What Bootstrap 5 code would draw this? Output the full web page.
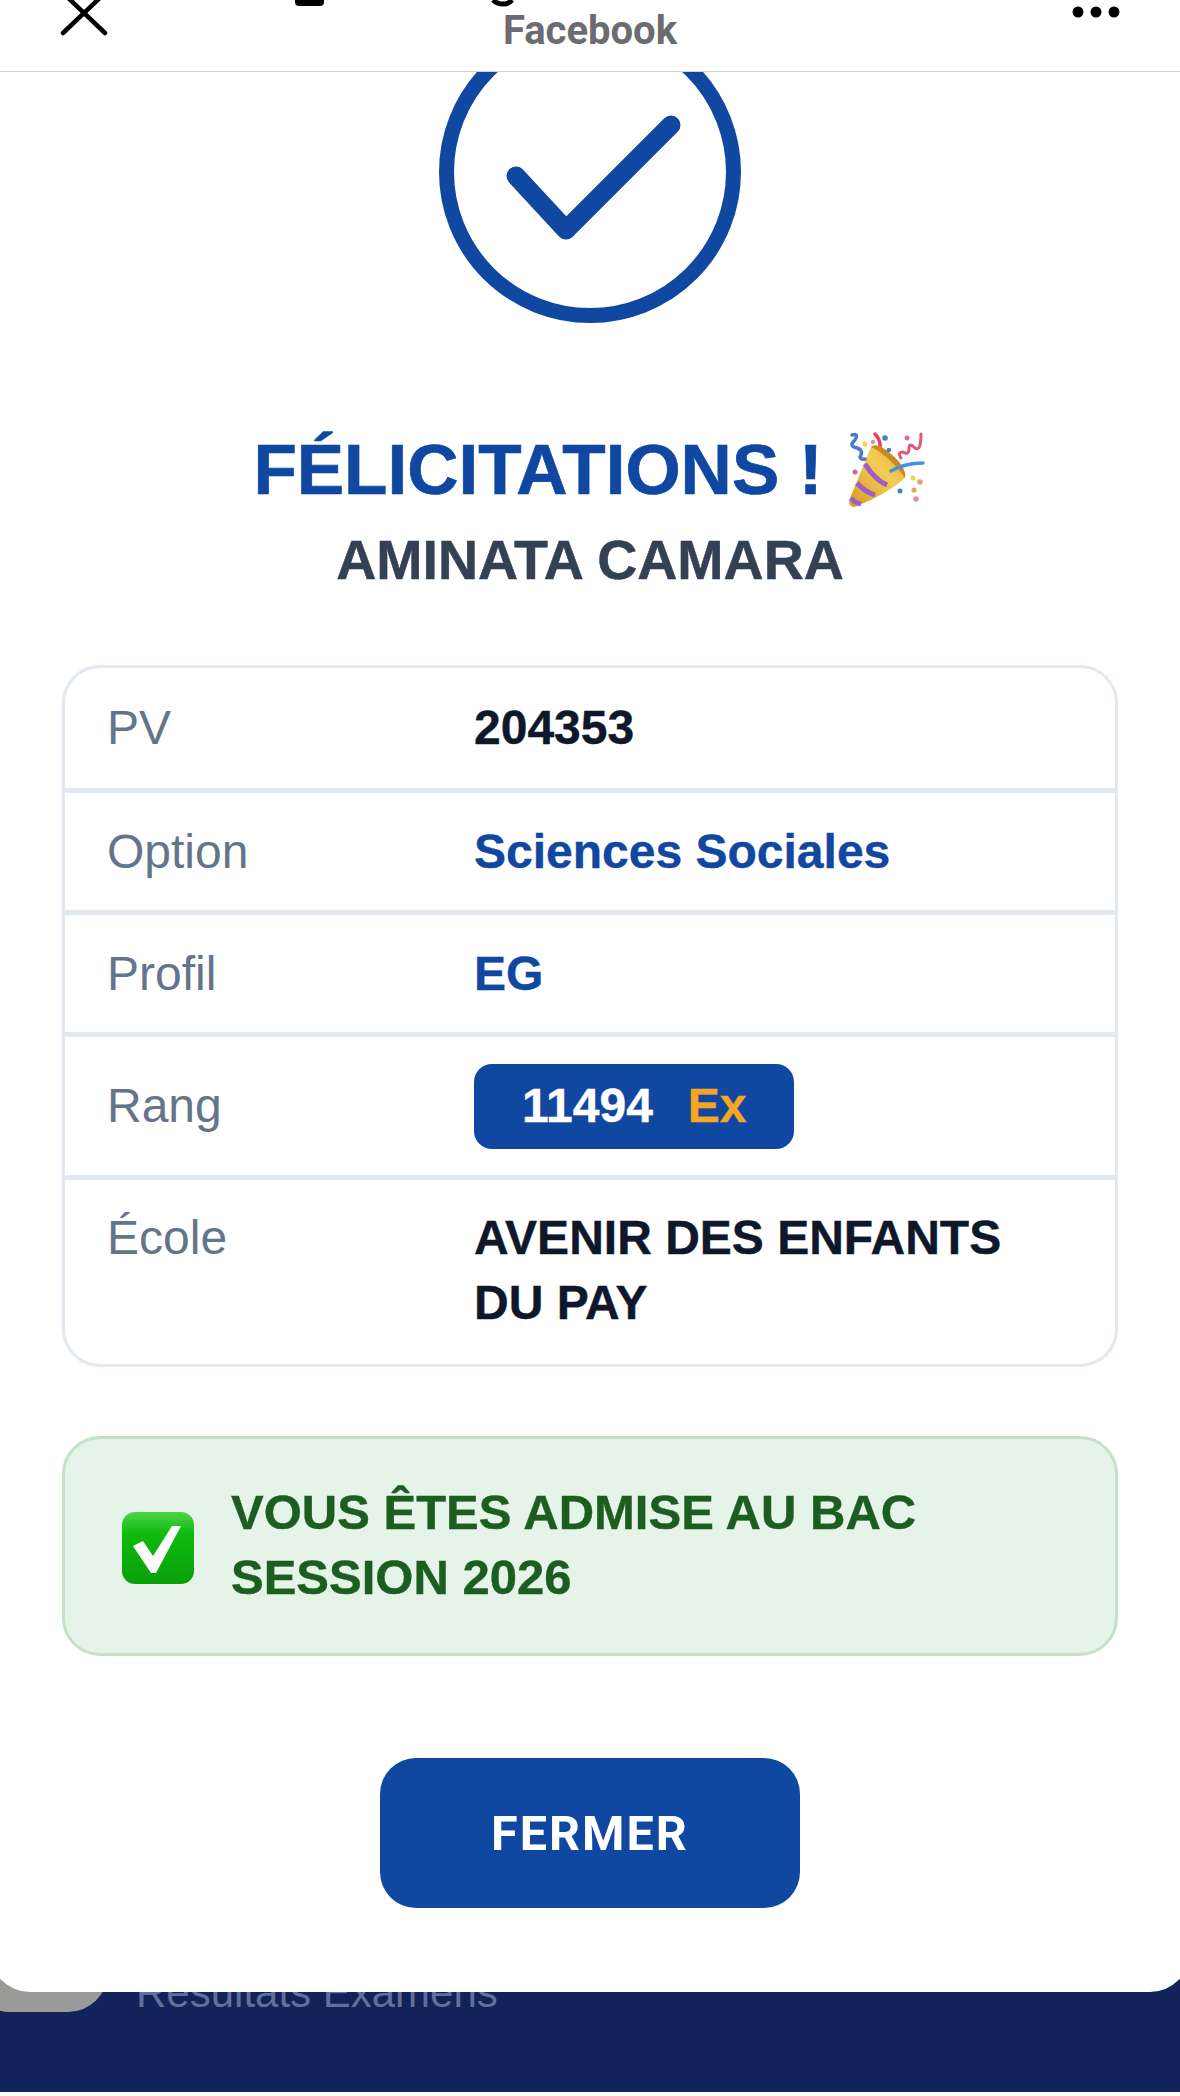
<!DOCTYPE html>
<html lang="fr">

<head>
    <meta charset="UTF-8">
    <meta name="viewport" content="width=device-width, initial-scale=1.0">
    <title>Résultats Examens</title>

    <!-- Bootstrap CSS -->
    <link href="https://cdn.jsdelivr.net/npm/bootstrap@5.3.0/dist/css/bootstrap.min.css" rel="stylesheet">
    <style>
        html, body { height: 2096px; overflow: hidden; }
        body { background: #fff; font-family: "Liberation Sans", Arial, sans-serif; position: relative; }

        .top-bar { height: 72px; border-bottom: 1px solid #d4d4d4; background: #fff; z-index: 3; }
        .top-title { font-family: Roboto, sans-serif; font-weight: 700; font-size: 40px; line-height: 40px; color: #6b6b70; padding-top: 11px; }
        .top-close { position: absolute; left: 60px; top: 0; }
        .top-more { position: absolute; left: 1070px; top: 4px; }
        .top-frag1 { position: absolute; left: 295px; top: 0; }
        .top-frag2 { position: absolute; left: 491px; top: 0; }

        .back-page { height: 2092px; background: #12225a; overflow: hidden; position: relative; }
        .back-label { position: absolute; left: 136px; top: 1968px; font-size: 42px; color: #5f709c; line-height: 50px; }
        .back-thumb { position: absolute; left: -30px; top: 1950px; width: 138px; height: 62px; background: #9a9a98; border-radius: 0 0 40px 40px; }

        .sheet { position: absolute; top: 0; left: -10px; right: -10px; height: 1992px; background: #fff; border-radius: 0 0 40px 40px; }
        .sheet-inner { padding: 72px 72px 0; }
        .check-wrap { height: 294px; overflow: hidden; }
        .check-wrap svg { display: block; margin: -51px auto 0; }

        .title-main { font-weight: 700; font-size: 71px; line-height: 80px; color: #0f47a1; margin: 0; padding-top: 64px; -webkit-text-stroke: .7px #0f47a1; }
        .title-name { font-weight: 700; font-size: 55.5px; line-height: 60px; color: #334155; margin: 0; padding-top: 20px; -webkit-text-stroke: .5px #334155; }

        .info-box { margin-top: 75px; border: 3px solid #e2e8f0; border-radius: 38px; font-size: 48px; }
        .info-row { border-bottom: 5px solid #e2e8f0; padding: 0 42px; display: flex; align-items: center; height: 122px; }
        .pv-row { height: 125px; }
        .rank-row { height: 143px; }
        .school-row { height: 184px; border-bottom: 0; align-items: flex-start; padding-top: 25px; line-height: 65px; }
        .info-key { width: 367px; flex: none; color: #64748b; }
        .info-val { font-weight: 700; color: #0f172a; -webkit-text-stroke: .4px; }
        .blue-val { color: #0f47a1; }
        .rank-pill { display: inline-flex; gap: 35px; background: #0f47a1; color: #fff; border-radius: 18px; padding: 0 48px; height: 85px; width: 320px; align-items: center; }
        .rank-ex { color: #f5a623; }

        .admit-box { margin-top: 69px; height: 220px; background: #e6f3e8; border: 3px solid #c3e2c6; border-radius: 38px; padding: 0 56px; font-weight: 700; font-size: 49px; line-height: 65px; color: #1b5e20; gap: 37px; -webkit-text-stroke: .4px #1b5e20; }
        .admit-box svg { margin-top: 4px; margin-left: 1px; }
        .admit-box span { margin-top: -2px; }

        .close-btn { width: 420px; height: 150px; background: #0f47a1; color: #fff; border: 0; border-radius: 36px; font-family: Roboto, sans-serif; font-weight: 700; font-size: 48.5px; letter-spacing: 2px; margin-top: 102px; padding-top: 8px; }
        .close-btn:hover { background: #0f47a1; color: #fff; }
    </style>
</head>

<body>

    <div class="back-page">
        <div class="back-thumb"></div>
        <div class="back-label">Résultats Examens</div>
    </div>

    <div class="sheet">
        <div class="sheet-inner text-center">
            <div class="check-wrap">
                <svg width="302" height="302" viewBox="0 0 302 302" fill="none" stroke="#0f47a1">
                    <circle cx="151" cy="151" r="143.5" stroke-width="15"/>
                    <path d="M77 155 L127 209 L232 104" stroke-width="19" stroke-linecap="round" stroke-linejoin="round"/>
                </svg>
            </div>

            <h1 class="title-main d-flex justify-content-center align-items-center gap-4">
                FÉLICITATIONS !
                <!-- party popper -->
                <svg width="80" height="80" viewBox="0 0 80 80">
                    <defs>
                        <linearGradient id="gold" x1="0" y1="1" x2="1" y2="0"><stop offset="0" stop-color="#d99a22"/><stop offset=".6" stop-color="#f2cc55"/><stop offset="1" stop-color="#e8a92e"/></linearGradient>
                    </defs>
                    <path d="M28 4 Q34 10 33 18 Q32 22 36 30" stroke="#e8405e" stroke-width="3.5" fill="none" stroke-linecap="round"/>
                    <path d="M4 76 Q1 74 3 68 L24 17 Q30 12 44 24 Q60 38 58 48 Q40 64 10 76 Q7 78 4 76Z" fill="url(#gold)"/>
                    <path d="M24 17 Q30 12 44 24 Q60 38 58 48 Q50 36 38 26 Q28 18 24 17Z" fill="#c98a1e"/>
                    <path d="M18 34 Q28 50 40 55 M10 53 Q18 62 28 65 M4 68 Q8 73 14 74" stroke="#a05cc8" stroke-width="5" fill="none"/>
                    <path d="M44 41 Q58 33 76 33" stroke="#4a8fdc" stroke-width="3.5" fill="none" stroke-linecap="round"/>
                    <path d="M5 5 Q12 3 8 10 Q1 16 10 18 Q17 20 13 27 Q14 30 18 29" stroke="#4a78d0" stroke-width="3.5" fill="none" stroke-linecap="round"/>
                    <path d="M54 28 Q50 22 56 22 Q62 26 62 18 Q62 12 68 18 Q74 22 74 4" stroke="#e05a78" stroke-width="3" fill="none" stroke-linecap="round"/>
                    <circle cx="18" cy="14" r="2.5" fill="#e8d84c"/><circle cx="38" cy="8" r="2.8" fill="#3f7fdc"/>
                    <circle cx="26" cy="12" r="2.2" fill="#e88ab0"/><circle cx="42" cy="20" r="2.3" fill="#3f7fdc"/>
                    <circle cx="60" cy="8" r="2.5" fill="#e06a90"/><circle cx="8" cy="42" r="2.5" fill="#d8608a"/>
                    <circle cx="66" cy="48" r="2.5" fill="#e8d84c"/><circle cx="73" cy="52" r="2.8" fill="#e0a868"/>
                    <circle cx="53" cy="61" r="2.5" fill="#3f7fdc"/><circle cx="67" cy="60" r="2.6" fill="#e0a868"/><circle cx="69" cy="69" r="2.8" fill="#e88aa0"/>
                </svg>
            </h1>
            <h2 class="title-name">AMINATA CAMARA</h2>

            <div class="info-box text-start">
                <div class="info-row pv-row"><span class="info-key">PV</span><span class="info-val">204353</span></div>
                <div class="info-row"><span class="info-key">Option</span><span class="info-val blue-val">Sciences Sociales</span></div>
                <div class="info-row"><span class="info-key">Profil</span><span class="info-val blue-val">EG</span></div>
                <div class="info-row rank-row"><span class="info-key">Rang</span><span class="info-val"><span class="rank-pill"><span>11494</span><span class="rank-ex">Ex</span></span></span></div>
                <div class="info-row school-row"><span class="info-key">École</span><span class="info-val">AVENIR DES ENFANTS<br>DU PAY</span></div>
            </div>

            <div class="admit-box d-flex align-items-center text-start">
                <svg class="flex-shrink-0" width="72" height="72" viewBox="0 0 72 72">
                    <defs><linearGradient id="gr" x1="0" y1="0" x2="0" y2="1"><stop offset="0" stop-color="#4fd44a"/><stop offset=".3" stop-color="#0dbb0d"/><stop offset="1" stop-color="#0a9f0a"/></linearGradient></defs>
                    <rect width="72" height="72" rx="13" fill="url(#gr)"/>
                    <path d="M11 34 L21 29 L31 44 L50 14 L59 14 L34 61 L29 61 Z" fill="#fff"/>
                </svg>
                <span>VOUS ÊTES ADMISE AU BAC<br>SESSION 2026</span>
            </div>

            <button type="button" class="btn close-btn d-block mx-auto">FERMER</button>
        </div>
    </div>

    <div class="top-bar position-absolute top-0 start-0 w-100 text-center">
        <!-- bottoms of the title glyphs that scroll off the top edge -->
        <svg class="top-frag1" width="30" height="7" viewBox="0 0 30 7"><path d="M0 0 H29 V2 Q29 6 25 6 H4 Q0 6 0 2Z" fill="#000"/></svg>
        <svg class="top-frag2" width="24" height="7" viewBox="0 0 24 7" fill="none" stroke="#000" stroke-width="5"><path d="M2 0 Q6 4 12 4 Q18 4 21 0"/></svg>
        <svg class="top-close" width="50" height="38" viewBox="0 0 50 38" fill="none" stroke="#000" stroke-width="4.5" stroke-linecap="round"><path d="M3 33 L45 -7 M45 33 L3 -7"/></svg>
        <svg class="top-more" width="52" height="16" viewBox="0 0 52 16" fill="#000"><circle cx="8" cy="8" r="5.5"/><circle cx="26" cy="8" r="5.5"/><circle cx="44" cy="8" r="5.5"/></svg>
        <div class="top-title">Facebook</div>
    </div>

    <!-- Bootstrap JS -->
    <script src="https://cdn.jsdelivr.net/npm/bootstrap@5.3.0/dist/js/bootstrap.bundle.min.js"></script>
</body>

</html>
